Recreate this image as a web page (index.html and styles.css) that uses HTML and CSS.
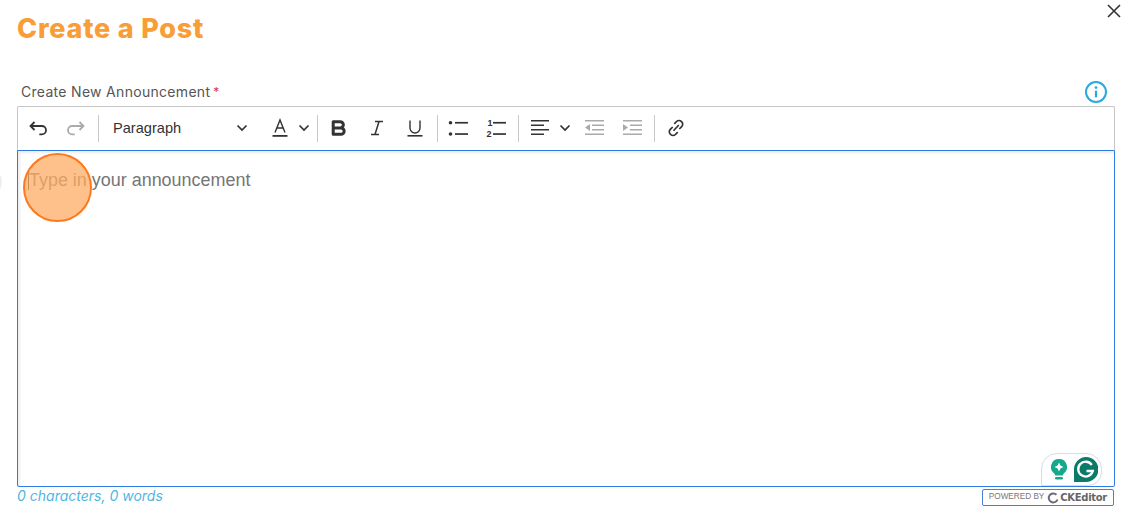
FILE: index.html
```html
<!DOCTYPE html>
<html lang="en">
<head>
<meta charset="utf-8">
<title>Create a Post</title>
<link rel="stylesheet" href="styles.css">
</head>
<body>
<main class="modal">
  <button class="close" aria-label="Close">
    <svg width="14" height="14" viewBox="0 0 14 14"><path d="M1 1l12 12M13 1L1 13" stroke="#333" stroke-width="1.600" fill="none"/></svg>
  </button>
  <h1 class="title">Create a Post</h1>
  <div class="label-row">
    <label class="label">Create New Announcement<span class="req">*</span></label>
    <svg class="info" width="24" height="24" viewBox="0 0 24 24"><circle cx="12" cy="12" r="10" stroke="#29a9e0" stroke-width="2" fill="none"/><circle cx="12" cy="7.600" r="1.400" fill="#29a9e0"/><rect x="10.900" y="10.400" width="2.200" height="7" rx="1" fill="#29a9e0"/></svg>
  </div>
  <div class="toolbar">
    <span class="tool"><svg width="20" height="20" viewBox="0 0 20 20"><path d="M6.500 4L2.500 8l4 4M2.800 8H13.800a4.200 4.200 0 0 1 0 8.400h-2.500" stroke="#333" stroke-width="1.800" fill="none"/></svg></span>
    <span class="tool"><svg width="20" height="20" viewBox="0 0 20 20"><path d="M13.500 4l4 4-4 4M17.200 8H6.200a4.200 4.200 0 0 0 0 8.400h2.500" stroke="#aaa" stroke-width="1.800" fill="none"/></svg></span>
    <span class="sep"></span>
    <span class="dropdown">Paragraph<svg class="chev" width="12" height="8" viewBox="0 0 12 8"><path d="M1.500 1.500L6 6l4.500-4.500" stroke="#333" stroke-width="1.700" fill="none"/></svg></span>
    <span class="tool color"><svg width="18" height="20" viewBox="0 0 18 20"><path d="M4 14.500L9 2l5 12.500M5.800 10h6.400" stroke="#333" stroke-width="1.400" fill="none"/><rect x="1.500" y="17" width="15" height="1.800" fill="#333"/></svg><svg width="12" height="8" viewBox="0 0 12 8"><path d="M1.500 1.500L6 6l4.500-4.500" stroke="#333" stroke-width="1.700" fill="none"/></svg></span>
    <span class="sep"></span>
    <span class="tool"><svg width="20" height="20" viewBox="0 0 20 20"><path d="M4.200 3.700h7a3 3 0 0 1 0 6.300H4.200h7.800a3.100 3.100 0 0 1 0 6.300H4.200z" stroke="#333" stroke-width="3" fill="none" stroke-linejoin="round"/></svg></span>
    <span class="tool"><svg width="20" height="20" viewBox="0 0 20 20"><path d="M8 3.500h8M4 16.500h8M12 3.500l-4 13" stroke="#333" stroke-width="1.500" fill="none"/></svg></span>
    <span class="tool"><svg width="20" height="20" viewBox="0 0 20 20"><path d="M5 2.500v7.500a5 5 0 0 0 10 0V2.500" stroke="#333" stroke-width="1.400" fill="none"/><rect x="2.500" y="17" width="15" height="1.600" fill="#333"/></svg></span>
    <span class="sep sep-tight"></span>
    <span class="tool"><svg width="20" height="20" viewBox="0 0 20 20"><circle cx="2.500" cy="4.700" r="1.800" fill="#333"/><circle cx="2.500" cy="16" r="1.800" fill="#333"/><rect x="7" y="3.900" width="13" height="1.700" fill="#333"/><rect x="7" y="15.200" width="13" height="1.700" fill="#333"/></svg></span>
    <span class="tool"><svg width="20" height="20" viewBox="0 0 20 20"><text x="1.500" y="8" class="num">1</text><text x="0.500" y="19" class="num">2</text><rect x="7" y="3.900" width="13" height="1.700" fill="#333"/><rect x="7" y="15.200" width="13" height="1.700" fill="#333"/></svg></span>
    <span class="sep"></span>
    <span class="tool align"><svg width="20" height="20" viewBox="0 0 20 20"><path d="M1 2.800h18M1 7.300h13M1 11.800h18M1 16.300h13" stroke="#333" stroke-width="1.500" fill="none"/></svg><svg width="12" height="8" viewBox="0 0 12 8"><path d="M1.500 1.500L6 6l4.500-4.500" stroke="#333" stroke-width="1.700" fill="none"/></svg></span>
    <span class="tool"><svg width="20" height="20" viewBox="0 0 20 20"><path d="M1 2.800h19M8 7.300h12M8 11.800h12M1 16.300h19" stroke="#aaa" stroke-width="1.500" fill="none"/><path d="M6 6v7L1 9.500z" fill="#aaa"/></svg></span>
    <span class="tool"><svg width="20" height="20" viewBox="0 0 20 20"><path d="M1 2.800h19M8 7.300h12M8 11.800h12M1 16.300h19" stroke="#aaa" stroke-width="1.500" fill="none"/><path d="M1 6v7l5-3.500z" fill="#aaa"/></svg></span>
    <span class="sep"></span>
    <span class="tool"><svg width="20" height="20" viewBox="0 0 20 20"><path d="M8.300 5.800l2.300-2.300a3.300 3.300 0 0 1 4.800.100l.3.300a3.300 3.300 0 0 1 0 4.700l-2.400 2.400M11.700 14.200l-2.300 2.300a3.300 3.300 0 0 1-4.700 0l-.4-.4a3.300 3.300 0 0 1 0-4.700l2.400-2.400M7.500 12.800l5.300-5.800" stroke="#333" stroke-width="1.700" fill="none"/></svg></span>
  </div>
  <div class="editor">
    <p class="placeholder"><span class="caret"></span>Type in your announcement</p>
    <div class="grammarly">
      <svg width="16" height="21" viewBox="0 0 16 21"><path d="M8 0a8 8 0 0 0-4.800 14.400c.7.600 1 1.300 1 2.100h7.600c0-.8.300-1.500 1-2.100A8 8 0 0 0 8 0z" fill="#15a88c"/><path d="M8 3.500l1.400 3.100L12.500 8 9.400 9.400 8 12.500 6.600 9.400 3.500 8l3.100-1.400z" fill="#fff"/><rect x="4" y="18" width="8" height="2.600" rx="1.300" fill="#15a88c"/></svg>
      <svg width="24" height="25" viewBox="0 0 24 25"><path d="M12 0a12.500 12.500 0 0 1 0 25H0V12.500A12.500 12.500 0 0 1 12 0z" fill="#0b7a68"/><path d="M17.800 8a7.400 7.400 0 1 0 1 6h-6.300" stroke="#fff" stroke-width="2.300" fill="none"/></svg>
    </div>
  </div>
  <div class="footer">
    <span class="count">0 characters, 0 words</span>
    <span class="powered">POWERED BY
      <svg class="ck-ring" width="12" height="12" viewBox="0 0 12 12"><path d="M9.500 2.800A4.500 4.500 0 1 0 10.500 7.500" stroke="#6d6a7c" stroke-width="2" fill="none"/></svg>
      <b class="brand">CKEditor</b></span>
  </div>
  <div class="cursor-dot"></div>
  <div class="edge-shadow"></div>
</main>
</body>
</html>
```
FILE: styles.css
```css
* { box-sizing: border-box; }
html, body { margin: 0; height: 100%; background: #fff; overflow: hidden; }
body { font-family: "Inter", "Liberation Sans", sans-serif; }
.modal { position: relative; width: 1125px; height: 524px; padding: 11px 10px 0 17px; }
.close { position: absolute; top: 4px; right: 4px; width: 14px; height: 14px; padding: 0; border: 0; background: none; display: block; }
.close svg { display: block; }
.title { margin: 0; font-size: 27px; line-height: 36px; font-weight: 800; color: #f99d36; letter-spacing: 0.800px; }
.label-row { display: flex; justify-content: space-between; align-items: flex-end; margin-top: 22px; padding-left: 4px; height: 37px; }
.label { font-size: 14px; line-height: 16px; color: #555; margin-bottom: 6px; letter-spacing: 0.300px; }
.req { color: #d9344a; margin-left: 3px; font-size: 12px; vertical-align: 1px; }
.info { margin-bottom: 2px; margin-right: 7px; }
.toolbar { height: 44px; border: 1px solid #c6c6c6; border-bottom: 0; border-radius: 2px 2px 0 0; display: flex; align-items: center; padding: 0 0 1px 10px; }
.tool { display: flex; align-items: center; gap: 9px; margin-right: 18px; flex: none; }
.tool svg { display: block; }
.sep { width: 1px; height: 27px; background: #c9c9c9; margin-right: 11px; margin-left: -6px; flex: none; }
.sep-tight { margin-right: 10px; }
.dropdown { display: flex; align-items: center; justify-content: space-between; width: 135px; margin: -1px 23px 0 3px; font: 14.600px/20px "Liberation Sans", sans-serif; color: #333; flex: none; }
.chev { margin-top: 1px; }
.color { margin-right: 13px; }
.align { margin-right: 13px; }
.num { font: 700 9px "Liberation Sans", sans-serif; fill: #333; }
.editor { position: relative; height: 337px; border: 1px solid #2f7be5; box-shadow: inset 2px 2px 3px rgba(0,0,0,.08); border-radius: 0 0 2px 2px; padding: 19px 10px; }
.placeholder { margin: 0; font: 17.950px/20px "Liberation Sans", sans-serif; color: #757575; display: flex; align-items: center; }
.caret { width: 1px; height: 20px; background: #333; }
.grammarly { position: absolute; right: 12px; bottom: 0; width: 61px; height: 33px; background: #fff; border: 1px solid #d6dde8; border-radius: 16px 16px 14px 0; display: flex; align-items: center; justify-content: space-between; padding: 0 3px 0 9px; }
.footer { display: flex; justify-content: space-between; align-items: flex-start; margin-right: 1px; }
.count { font-size: 14px; line-height: 18px; font-style: italic; color: #4fb6e3; }
.powered { display: flex; align-items: center; gap: 3px; height: 17px; padding: 0 6px; margin-top: 2px; border: 1px solid #4a7fd6; border-radius: 2px; font: 8.200px/1 "Liberation Sans", sans-serif; color: #777; }
.ck-ring { margin-right: -2px; }
.brand { font: 700 10px/1 "DejaVu Sans", sans-serif; color: #666; letter-spacing: -0.300px; }
.cursor-dot { position: absolute; left: 23px; top: 153px; width: 69px; height: 69px; border-radius: 50%; background: rgba(254,172,100,.75); border: 2.500px solid #fb7a1f; }
.edge-shadow { position: absolute; left: -6px; top: 174px; width: 8px; height: 16px; border-radius: 50%; background: #eee; }
```
